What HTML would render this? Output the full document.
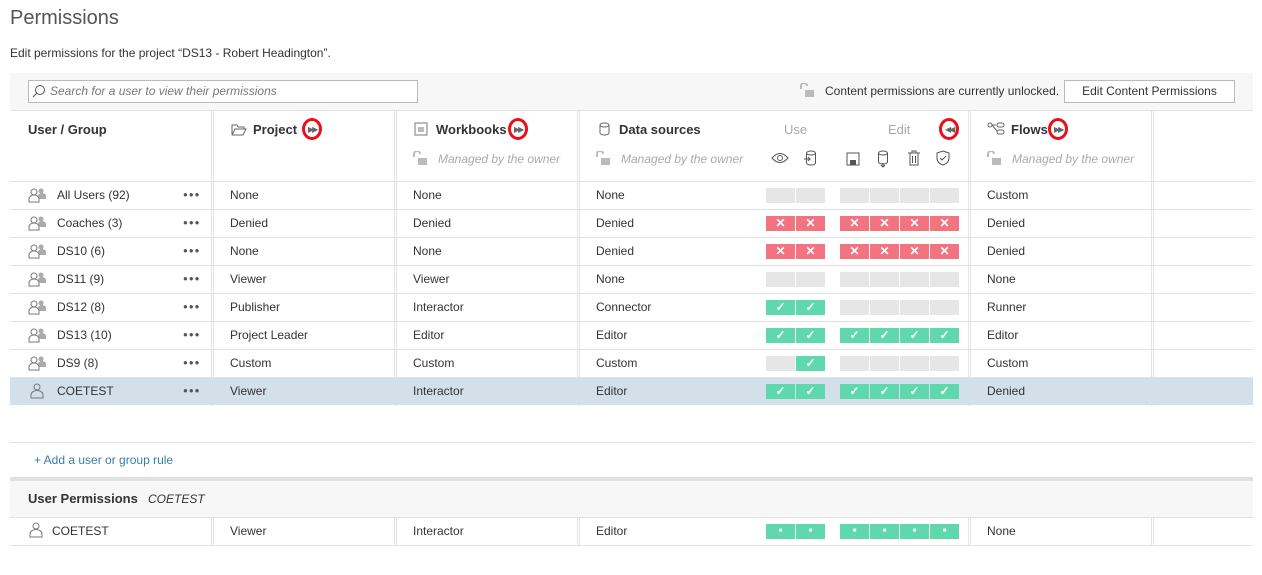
<!DOCTYPE html><html><head><meta charset="utf-8"><style>
*{margin:0;padding:0;box-sizing:border-box}
body{width:1262px;height:575px;background:#fff;font-family:"Liberation Sans",sans-serif;color:#333;font-size:12px;position:relative;overflow:hidden}
.a{position:absolute}
.t{position:absolute;white-space:nowrap}
.hl{position:absolute;left:10px;width:1243px;height:1px;background:#e3e3e3}
.vl{position:absolute;width:1px;background:#e3e3e3}
.b{position:absolute;width:29px;height:15px;background:#e6e6e6;color:#fff;font-size:12px;font-weight:bold;text-align:center;line-height:15px}
.x{background:#f27480}.c{background:#5fd8ad}
.hd{font-size:13px;font-weight:bold;color:#333}
.mg{font-style:italic;color:#aaa;font-size:12px}
.ff{position:absolute;width:20px;height:22px;border:3px solid #e8101a;border-radius:50%;background:#fff}
.ff span{position:absolute;left:3px;top:4px;font-size:8px;color:#666;letter-spacing:-2px}
</style></head><body>
<div class="t" style="left:10px;top:7px;font-size:20px;color:#555">Permissions</div>
<div class="t" style="left:10px;top:46px;font-size:12px">Edit permissions for the project “DS13 - Robert Headington”.</div>
<div class="a" style="left:10px;top:73px;width:1243px;height:37px;background:#f7f7f7"></div>
<div class="a" style="left:28px;top:80px;width:390px;height:23px;border:1px solid #bbb;background:#fff"></div>
<svg class="a" style="left:32px;top:84px" width="14" height="14"><circle cx="8" cy="6" r="4.5" fill="none" stroke="#555"/><path d="M5 9L1 13" stroke="#555"/></svg>
<div class="t" style="left:50px;top:84px;font-style:italic;color:#777">Search for a user to view their permissions</div>
<svg class="a" style="left:799px;top:83px" width="16" height="14"><path d="M2 6V3a3 3 0 0 1 6 0" fill="none" stroke="#bbb" stroke-width="2"/><rect x="6" y="7" width="9" height="7" fill="#bbb"/></svg>
<div class="t" style="left:825px;top:84px">Content permissions are currently unlocked.</div>
<div class="a" style="left:1064px;top:80px;width:171px;height:23px;border:1px solid #bbb;background:#fff;text-align:center;line-height:21px">Edit Content Permissions</div>
<div class="hl" style="top:110px"></div>
<div class="vl" style="left:211px;top:110px;height:296px"></div><div class="vl" style="left:213px;top:110px;height:296px"></div>
<div class="vl" style="left:394px;top:110px;height:296px"></div><div class="vl" style="left:396px;top:110px;height:296px"></div>
<div class="vl" style="left:577px;top:110px;height:296px"></div><div class="vl" style="left:579px;top:110px;height:296px"></div>
<div class="vl" style="left:968px;top:110px;height:296px"></div><div class="vl" style="left:970px;top:110px;height:296px"></div>
<div class="vl" style="left:1151px;top:110px;height:296px"></div><div class="vl" style="left:1153px;top:110px;height:296px"></div>
<div class="t hd" style="left:28px;top:122px">User / Group</div>
<svg class="a" style="left:231px;top:123px" width="16" height="13"><path d="M1 2h5l1 2h6v2H4L1 12zM4 6h11l-3 6H1" fill="none" stroke="#666"/></svg>
<div class="t hd" style="left:253px;top:122px">Project</div>
<div class="ff" style="left:302px;top:118px"><span>▶▶</span></div>
<svg class="a" style="left:414px;top:122px" width="14" height="14"><rect x="1" y="1" width="12" height="12" fill="none" stroke="#777"/><rect x="4" y="5" width="6" height="5" fill="#bbb"/></svg>
<div class="t hd" style="left:436px;top:122px">Workbooks</div>
<div class="ff" style="left:508px;top:118px"><span>▶▶</span></div>
<svg class="a" style="left:599px;top:122px" width="11" height="14"><ellipse cx="5.5" cy="3" rx="4.5" ry="2" fill="none" stroke="#666"/><path d="M1 3v8a4.5 2 0 0 0 9 0V3" fill="none" stroke="#666"/></svg>
<div class="t hd" style="left:619px;top:122px">Data sources</div>
<div class="t" style="left:784px;top:122px;font-size:13px;color:#aaa">Use</div>
<div class="t" style="left:888px;top:122px;font-size:13px;color:#aaa">Edit</div>
<div class="ff" style="left:939px;top:118px"><span>◀◀</span></div>
<svg class="a" style="left:987px;top:122px" width="18" height="14"><circle cx="3" cy="3" r="2" fill="none" stroke="#666"/><path d="M5 3l5 6M5 3h4" stroke="#666" fill="none"/><rect x="10" y="1" width="7" height="4" rx="2" fill="none" stroke="#666"/><rect x="10" y="8" width="7" height="4" rx="2" fill="none" stroke="#666"/></svg>
<div class="t hd" style="left:1011px;top:122px">Flows</div>
<div class="ff" style="left:1048px;top:118px"><span>▶▶</span></div>
<svg class="a" style="left:412px;top:151px" width="16" height="14"><path d="M2 6V3a3 3 0 0 1 6 0" fill="none" stroke="#bbb" stroke-width="2"/><rect x="6" y="7" width="9" height="7" fill="#bbb"/></svg>
<div class="t mg" style="left:438px;top:152px">Managed by the owner</div>
<svg class="a" style="left:595px;top:151px" width="16" height="14"><path d="M2 6V3a3 3 0 0 1 6 0" fill="none" stroke="#bbb" stroke-width="2"/><rect x="6" y="7" width="9" height="7" fill="#bbb"/></svg>
<div class="t mg" style="left:621px;top:152px">Managed by the owner</div>
<svg class="a" style="left:986px;top:151px" width="16" height="14"><path d="M2 6V3a3 3 0 0 1 6 0" fill="none" stroke="#bbb" stroke-width="2"/><rect x="6" y="7" width="9" height="7" fill="#bbb"/></svg>
<div class="t mg" style="left:1012px;top:152px">Managed by the owner</div>
<svg class="a" style="left:771px;top:151px" width="18" height="14"><path d="M1 7q8-9 16 0q-8 9-16 0z" fill="none" stroke="#555"/><circle cx="9" cy="7" r="2.5" fill="none" stroke="#555"/></svg>
<svg class="a" style="left:803px;top:150px" width="14" height="16"><ellipse cx="8" cy="3" rx="4.5" ry="2" fill="none" stroke="#555"/><path d="M3.5 3v10a4.5 2 0 0 0 9 0V3M1 9h6l-2-2M7 9l-2 2" fill="none" stroke="#555"/></svg>
<svg class="a" style="left:846px;top:152px" width="14" height="14"><rect x="1" y="1" width="12" height="12" fill="none" stroke="#555"/><rect x="4" y="8" width="6" height="5" fill="#555"/></svg>
<svg class="a" style="left:877px;top:150px" width="12" height="18"><ellipse cx="6" cy="3" rx="4.5" ry="2" fill="none" stroke="#555"/><path d="M1.5 3v9a4.5 2 0 0 0 9 0V3M6 13v4M4 15l2 2 2-2" fill="none" stroke="#555"/></svg>
<svg class="a" style="left:907px;top:150px" width="14" height="16"><path d="M1 3h12M5 3V1h4v2M3 3v12h8V3M5.5 6v7M8.5 6v7" fill="none" stroke="#555"/></svg>
<svg class="a" style="left:936px;top:150px" width="14" height="16"><path d="M7 1l6 2v5q0 5-6 7q-6-2-6-7V3z" fill="none" stroke="#555"/><path d="M4 8l2 2 4-4" fill="none" stroke="#555"/></svg>
<div class="hl" style="top:181px"></div>
<div class="a" style="left:10px;top:377px;width:1243px;height:28px;background:#d3dfe9"></div>
<div id="rows"></div>
<script>
var R=[["All Users (92)","None","None","None","ee","eeee","Custom",1],
["Coaches (3)","Denied","Denied","Denied","xx","xxxx","Denied",1],
["DS10 (6)","None","None","Denied","xx","xxxx","Denied",1],
["DS11 (9)","Viewer","Viewer","None","ee","eeee","None",1],
["DS12 (8)","Publisher","Interactor","Connector","cc","eeee","Runner",1],
["DS13 (10)","Project Leader","Editor","Editor","cc","cccc","Editor",1],
["DS9 (8)","Custom","Custom","Custom","ec","eeee","Custom",1],
["COETEST","Viewer","Interactor","Editor","cc","cccc","Denied",0]];
var grp='<svg class="a" style="left:28px;top:TTpx" width="18" height="16"><circle cx="6" cy="5" r="3" fill="none" stroke="#777"/><path d="M1 15v-3a5 4 0 0 1 10 0v3z" fill="none" stroke="#777"/><circle cx="13" cy="4" r="2.5" fill="#aaa"/><path d="M10 9a4 3 0 0 1 8 0v3h-6" fill="#aaa"/></svg>';
var usr='<svg class="a" style="left:LLpx;top:TTpx" width="14" height="16"><circle cx="7" cy="4" r="3" fill="none" stroke="#777"/><path d="M1 15v-3a6 4.5 0 0 1 12 0v3z" fill="none" stroke="#777"/></svg>';
function bx(s,x,y,dot){var h='';for(var i=0;i<s.length;i++){var k=s[i];h+='<div class="b '+(k=='e'?'':k)+'" style="left:'+(x+i*30)+'px;top:'+y+'px">'+(dot?'<span style="font-size:6px;vertical-align:top">■</span>':k=='x'?'✕':k=='c'?'✓':'')+'</div>'}return h}
var h='';R.forEach(function(r,i){var y=181+i*28;
h+=(r[7]?grp.replace('TT',y+6):usr.replace('LL',30).replace('TT',y+6));
h+='<div class="t" style="left:57px;top:'+(y+7)+'px">'+r[0]+'</div><div class="t" style="left:183px;top:'+(y+9)+'px;color:#555;font-size:8px;letter-spacing:1px">●●●</div>';
h+='<div class="t" style="left:230px;top:'+(y+7)+'px">'+r[1]+'</div><div class="t" style="left:413px;top:'+(y+7)+'px">'+r[2]+'</div><div class="t" style="left:596px;top:'+(y+7)+'px">'+r[3]+'</div><div class="t" style="left:987px;top:'+(y+7)+'px">'+r[6]+'</div>';
h+=bx(r[4],766,y+7)+bx(r[5],840,y+7);
if(i<7)h+='<div class="hl" style="top:'+(y+28)+'px"></div>';});
h+='<div class="a" style="left:10px;top:481px;width:1243px;height:36px;background:#f7f7f7"></div>';
h+='<div class="hl" style="top:442px"></div><div class="a" style="left:10px;top:477px;width:1243px;height:4px;background:#e0e0e0"></div><div class="hl" style="top:517px"></div><div class="hl" style="top:545px"></div>';
h+='<div class="t" style="left:34px;top:453px;color:#3b7ba8">+ Add a user or group rule</div>';
h+='<div class="t hd" style="left:28px;top:491px">User Permissions</div><div class="t" style="left:148px;top:492px;font-style:italic">COETEST</div>';
[211,213,394,396,577,579,968,970,1151,1153].forEach(function(x){h+='<div class="vl" style="left:'+x+'px;top:517px;height:28px"></div>'});
h+=usr.replace('LL',29).replace('TT',522)+'<div class="t" style="left:52px;top:524px">COETEST</div><div class="t" style="left:230px;top:524px">Viewer</div><div class="t" style="left:413px;top:524px">Interactor</div><div class="t" style="left:596px;top:524px">Editor</div><div class="t" style="left:987px;top:524px">None</div>';
h+=bx('cc',766,524,1)+bx('cccc',840,524,1);
document.getElementById('rows').innerHTML=h;
</script>
</body></html>
